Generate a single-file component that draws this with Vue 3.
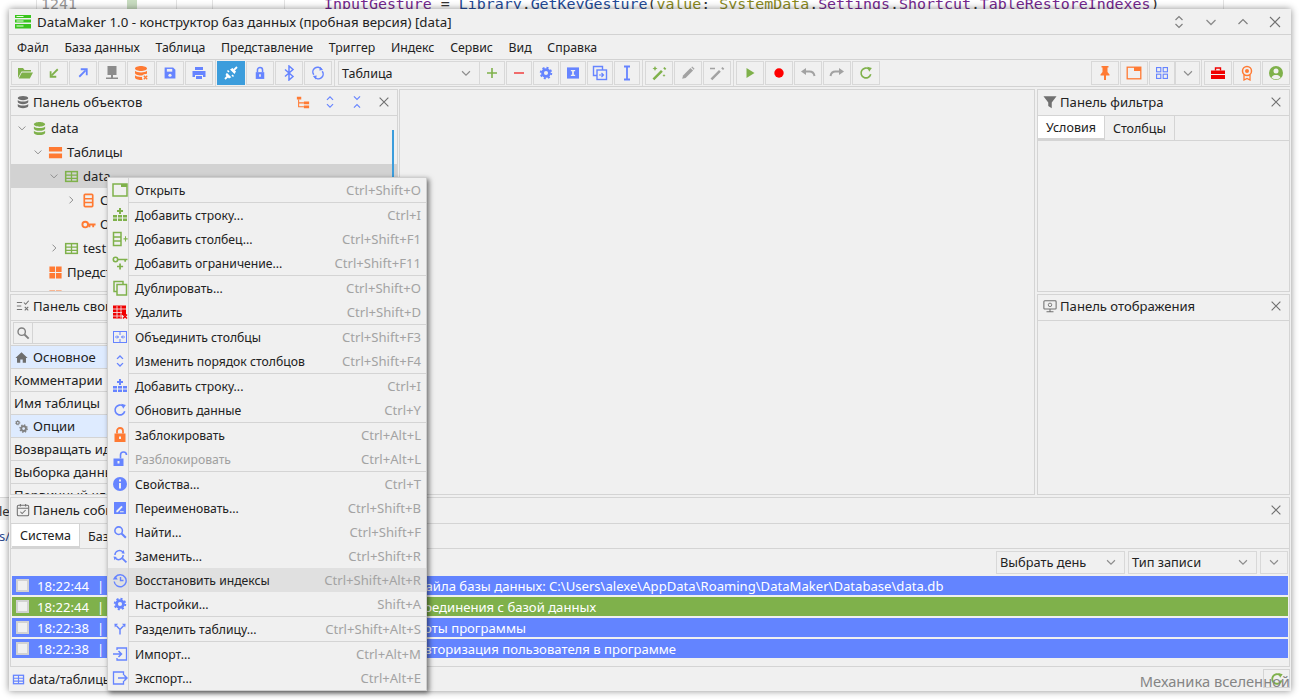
<script setup>
const G = '#7fb14b'
const B = '#6684ff'
const O = '#ff7a33'
const R = '#f00000'
const K = '#8c8c8c'
const L = '#a2a2a2'

const s = (d, c, w = 1.6) => `<path d="${d}" fill="none" stroke="${c}" stroke-width="${w}"/>`
const f = (d, c) => `<path d="${d}" fill="${c}"/>`
// сжать иконку вокруг центра
const k = (n, inner) => `<g transform="translate(${8 - 8 * n} ${8 - 8 * n}) scale(${n})">${inner}</g>`
const gear = (c) => `<circle cx="8" cy="8" r="4.2" fill="none" stroke="${c}" stroke-width="3.4"/><circle cx="8" cy="8" r="6.4" fill="none" stroke="${c}" stroke-width="2.4" stroke-dasharray="2.5 2.5"/>`
const db = (c) => f('M2 3.5C2 2 5 1 8 1s6 1 6 2.5S11 6 8 6 2 5 2 3.5zM2 5.8C3 7 5.5 7.5 8 7.5S13 7 14 5.8V8c0 1.4-3 2.5-6 2.5S2 9.4 2 8zM2 10.300C3 11.5 5.5 12 8 12s5-.5 6-1.700v2.200C14 14 11 15 8 15s-6-1-6-2.500z', c)
const table = (c) => `<rect x="1.800" y="2.800" width="12.400" height="10.400" fill="none" stroke="${c}" stroke-width="1.600"/>` + s('M2 6.500h12M2 10h12M8 3v10', c, 1.400)
const addRow = (c) => f('M7 1h2v2h2v2H9v2H7V5H5V3h2z', c) + `<rect x="1" y="8" width="14" height="6" fill="${c}"/>` + s('M5.500 8v6M10.500 8v6M1 11h14', '#f0f0f0', 1)
const copy = (c) => `<rect x="2" y="1.500" width="9" height="10" fill="none" stroke="${c}" stroke-width="1.500"/><rect x="5" y="4.500" width="9.500" height="10.500" fill="#f0f0f0" stroke="${c}" stroke-width="1.500"/>`
const refresh = (c) => s('M13.300 9.500A5.500 5.500 0 1 1 11.500 3.700', c, 1.800) + f('M9.500 1l5 1.500-3 4z', c)
const wand = (c) => f('M1.500 13.500 10 5l1.800 1.800-8.500 8.500zM12.200 3.200l1.300-1.300 1.800 1.800-1.300 1.300z', c)

const icons = {
  folder: f('M1 3h5l1.500 2H14v1.500H4.500L1 13z', G) + f('M4.800 7.500H16L12.800 13.500H1.700z', G),
  arrowIn: k(0.75, s('M13 3 4.500 11.500', G, 2.400) + s('M3.500 5.500v7.500h7.500', G, 2.400)),
  arrowOut: k(0.75, s('M3 13 11.500 4.500', B, 2.400) + s('M5 3h8v8', B, 2.400)),
  server: f('M3.500 1h9v9h-9z', K) + f('M7 10h2v2.500h5V14H2v-1.500h5z', K),
  dbDel: db(O) + `<circle cx="12.500" cy="12.500" r="3.500" fill="#f0f0f0"/>` + s('M10.800 10.800l3.400 3.400M14.200 10.800l-3.400 3.400', O, 1.300),
  save: k(0.9, f('M2 2h9.500L14 4.500V14H2z', B) + f('M4.500 3.500h6v3h-6z', '#f0f0f0') + `<circle cx="8" cy="10.500" r="1.800" fill="#f0f0f0"/>`),
  print: f('M4 2h8v3H4zM1.500 6h13v6H12v-2H4v2H1.500zM5 11h6v3H5z', B),
  plug: s('M2 14l3-3M14 2l-3 3', '#fff', 1.800) + f('M3.800 7.700 8.300 12.200 6 13.500 2.500 10zM7 4.500l4.500 4.500 1.500-2.500L9.500 3z', '#fff') + s('M6 7 4.500 5.500M9 10l1.500 1.500', '#fff', 1.500),
  lock: k(0.85, f('M3 7h10v8H3z', B) + s('M5 7V4.500a3 3 0 0 1 6 0V7', B, 1.800) + f('M7 9.500h2v3H7z', '#f0f0f0')),
  bluetooth: s('M4 4.500l8 7-4 3.500V1l4 3.500-8 7', B, 1.500),
  sync: k(0.85, s('M3 10A5.500 5.500 0 0 1 12 3.500', B, 1.800) + s('M13 6A5.500 5.500 0 0 1 4 12.500', B, 1.800) + f('M10.500 .5 14 4.500 9.500 5zM5.500 15.500 2 11.500l4.500-.5z', B)),
  plus: f('M7.200 3h1.600v4.200H13v1.600H8.800V13H7.200V8.800H3V7.200h4.200z', G),
  minus: f('M3 7.200h10v1.600H3z', '#f04a4a'),
  gear: k(0.82, gear(B)),
  infoBox: k(0.86, f('M1 1.500h14v13H1z', B) + f('M5.500 4.500h5V6H9v4h1.500v1.500h-5V10H7V6H5.500z', '#f0f0f0')),
  copyBlue: s('M10.500 5V1.500h-9v9H5', B, 1.400) + `<rect x="5" y="5" width="9.500" height="9.500" fill="none" stroke="${B}" stroke-width="1.400"/>` + s('M7 10h4M9.500 8l2 2-2 2', B, 1.200),
  ibeam: s('M5 1.500h6M5 14.500h6M8 1.500v13', B, 1.800),
  wandG: wand(G) + f('M4 1l.8 1.700 1.700.8-1.700.8L4 6l-.8-1.700-1.700-.8 1.700-.8zM13 9l.5 1 1 .5-1 .5-.5 1-.5-1-1-.5 1-.5z', G),
  pencil: k(0.9, f('M1.500 14.500l1-3.800L10.800 2.500l2.800 2.800-8.300 8.200z', L) + f('M11.700 1.600l1-.9 2.600 2.600-1 1z', L)),
  wandK: wand(L) + s('M1 3.500h5', L, 1.500),
  play: f('M4.500 3l8 5-8 5z', G),
  record: `<circle cx="8" cy="8" r="4.700" fill="#f00"/>`,
  undo: s('M3.500 6.500H9.500c2.500 0 4.500 1.500 5 4.500', L, 2) + f('M6 3v7L1 6.500z', L),
  redo: s('M12.500 6.500H6.500c-2.500 0-4.500 1.500-5 4.500', L, 2) + f('M10 3v7l5-3.500z', L),
  refreshG: k(0.9, refresh(G)),
  pin: f('M4.500 1h7v1.500h-1V7l2 2.500v1H9V15H7v-4.500H3.500v-1l2-2.500V2.500h-1z', O),
  win: `<rect x="1.200" y="2.200" width="13.600" height="11.600" fill="none" stroke="${O}" stroke-width="1.300"/>` + f('M8 2h7v4H8z', O),
  grid: k(0.85, `<g fill="none" stroke="${B}" stroke-width="1.300"><rect x="1.600" y="1.600" width="5" height="5"/><rect x="9.400" y="1.600" width="5" height="5"/><rect x="1.600" y="9.400" width="5" height="5"/><rect x="9.400" y="9.400" width="5" height="5"/></g>`),
  chevron: s('M3.500 6 8 10.500 12.500 6', K, 1.300),
  toolbox: f('M1 5.500h14V9H1zM1 10h14v4H1z', R) + s('M5.500 5.500V3h5v2.500', R, 1.400),
  badge: `<circle cx="8" cy="6" r="4.500" fill="none" stroke="${O}" stroke-width="1.500"/><circle cx="8" cy="6" r="2" fill="${O}"/>` + s('M5 10v5l3-1.500 3 1.500v-5', O, 1.300),
  user: `<circle cx="8" cy="8" r="7" fill="${G}"/><circle cx="8" cy="6" r="2.500" fill="#f0f0f0"/>` + f('M3.500 12.500C4.500 10.500 6 10 8 10s3.500.5 4.500 2.500C11.500 13.700 10 14.300 8 14.300S4.500 13.700 3.500 12.500z', '#f0f0f0'),
  dbGray: db('#6e6e6e'),
  dbGreen: db(G),
  treeOrange: f('M1 2h5v3H1zM9 7.500h6v3H9zM9 12h6v3H9z', O) + s('M3 5v8.500h6M3 9h6', O, 1.200),
  expand: s('M4.500 5.500 8 2l3.500 3.500M4.500 10.500 8 14l3.500-3.500', B, 1.300),
  collapse: s('M4.500 1.500 8 5l3.500-3.500M4.500 14.500 8 11l3.500 3.500', B, 1.300),
  close: s('M3 3l10 10M13 3 3 13', '#707070', 1.300),
  updown: s('M4.500 6 8 2.500 11.500 6M4.500 10 8 13.500 11.500 10', '#808080', 1.200),
  up: s('M3.500 10 8 5.500 12.500 10', '#808080', 1.200),
  winClose: s('M3 3l10 10M13 3 3 13', '#707070', 1.100),
  logo: f('M0 1h16v3H0z', '#39c41c') + f('M0 5.500h16v3H0z', '#39c41c') + f('M0 10h16v4.500H0z', '#39c41c') + f('M1.500 6.500h7v1h-7zM1.500 11.500h7v1h-7zM1.500 2h7v1h-7z', '#e8ffe0'),
  tables: f('M1 2h14v5H1zM1 9h14v5H1z', O),
  tableG: table(G),
  tableB: table(B),
  columns: `<rect x="3.500" y="1.500" width="9" height="13" rx="1" fill="none" stroke="${O}" stroke-width="1.800"/>` + s('M4 6h8M4 10h8', O, 1.600),
  key: `<circle cx="4.500" cy="8" r="3" fill="none" stroke="${O}" stroke-width="2"/>` + f('M7 7h8.500v2h-1.500v2h-2V9H10v2H8V9H7z', O),
  views: f('M1.500 1.500h6v6h-6zM8.500 1.500h6v6h-6zM1.500 8.500h6v6h-6zM8.500 8.500h6v6h-6z', O),
  propsPanel: s('M1 4h6M1 8h5M1 12h6', '#707070', 1.100) + s('M9 4l2 2 3.500-4M10 9l4 4M14 9l-4 4', '#707070', 1.200),
  search: `<circle cx="6.500" cy="6.500" r="4.200" fill="none" stroke="#808080" stroke-width="1.600"/>` + s('M9.700 9.700 14.500 14.500', '#808080', 2.200),
  home: f('M8 1.500 15.500 8.500H13.500V14.500H9.500V10.500H6.500V14.500H2.500V8.500H.5z', '#6e6e6e'),
  gears: `<g transform="translate(5 5) scale(.7)">${gear('#808080')}</g><g transform="scale(.42)">${gear('#808080')}</g>`,
  calendar: `<rect x="1.500" y="2.500" width="13" height="12" rx="1.500" fill="none" stroke="#707070" stroke-width="1.200"/>` + s('M2 6h12M5 1v3M11 1v3', '#707070', 1.200) + s('M5 10l2 2 4-4', '#707070', 1.200),
  filter: f('M.5 1.500h15L10 8.500V15l-4-2.500v-4z', '#707070'),
  monitor: `<rect x="1" y="2" width="14" height="9.500" rx="1" fill="none" stroke="#707070" stroke-width="1.200"/>` + s('M4 14.500h8M8 11.500v3', '#707070', 1.200) + `<circle cx="8" cy="6.700" r="2" fill="none" stroke="#707070" stroke-width="1"/>`,
  open: `<rect x="1" y="2" width="14" height="12" fill="none" stroke="${G}" stroke-width="1.500"/>` + f('M9 2h6v3H9z', G),
  addRowG: addRow(G),
  addCol: `<rect x="1.500" y="1.500" width="7.500" height="13" fill="none" stroke="${G}" stroke-width="1.500"/>` + s('M2 6h7M2 10h7', G, 1.500) + f('M11.500 7.200h1.500V5.200h1v2h1.700v1.200H14v2h-1v-2h-1.500z', G),
  keyAdd: `<circle cx="3.500" cy="4.500" r="2.200" fill="none" stroke="${G}" stroke-width="1.600"/>` + f('M5.500 3.700h10v1.600h-1.500v1.500h-1.700V5.300H5.500z', G) + f('M7.200 8.500h1.700v2.200h2.200v1.600H8.900v2.200H7.200v-2.200H5v-1.600h2.200z', G),
  copyG: copy(G),
  tableDel: f('M1 1.500h13V11H10v3.500H1z', R) + s('M1 5h13M1 8.500h9M1 12h9M5 2v12M9 2v12', '#f0f0f0', .8) + s('M11 10.500l4 4M15 10.500l-4 4', R, 1.500),
  merge: `<rect x="1.500" y="2.500" width="13" height="11" fill="none" stroke="${B}" stroke-width="1"/>` + s('M3 8h3.500M13 8H9.500M8 2v4M8 10v4', B, 1) + s('M5 6.500 6.500 8 5 9.500M11 6.500 9.500 8l1.500 1.500', B, 1),
  order: k(0.85, s('M4.500 5.500 8 2l3.500 3.500M4.500 10.500 8 14l3.500-3.500', B, 1.600)),
  addRowB: addRow(B),
  refreshB: k(0.9, refresh(B)),
  lockO: f('M2.500 6.500h11V15h-11z', O) + s('M5 6.500V4a3 3 0 0 1 6 0v2.500', O, 1.800) + f('M7 9.500h2v2.500H7z', '#f0f0f0'),
  unlock: f('M1.500 7.500h10V15h-10z', B) + s('M8.500 7.500V4a3 3 0 0 1 6 0', B, 1.600) + f('M5.500 10h2v2.500h-2z', '#f0f0f0'),
  info: `<circle cx="8" cy="8" r="7" fill="${B}"/>` + f('M7 3.500h2v2H7zM7 7h2v5.500H7z', '#f0f0f0'),
  rename: k(0.92, f('M1.500 1.500h13v13h-13z', B) + f('M4 11l5.500-5.500 1.500 1.500L5.500 12.500H4zM8 11.500h4v1H8z', '#f0f0f0')),
  searchB: k(0.9, `<circle cx="6.500" cy="6.500" r="4.200" fill="none" stroke="${B}" stroke-width="1.700"/>` + s('M9.700 9.700 14.500 14.500', B, 2.300)),
  replace: k(0.92, s('M2.500 7a5 5 0 0 1 8.500-3.500M11.500 7A5 5 0 0 1 3 10.500', B, 1.600) + f('M9.500 5 13 5.500 12 1.500zM4.500 9 1 8.500 2 12.500z', B) + s('M10.500 10.500 15 15', B, 2)),
  restore: s('M3.500 5A6 6 0 1 1 2.200 9.500', B, 1.400) + f('M.8 7.500h5L3.300 3.800z', B) + s('M8.500 5v3.500h3', B, 1.400),
  split: k(0.8, s('M8 15V8.500M8 8.500 3.500 4M8 8.500 12.500 4', B, 1.800) + f('M1 1.500h4.500L1.500 6zM15 1.500h-4.500l4 4.500z', B)),
  importI: s('M5 4V2h9.500v12H5v-2', B, 1.300) + s('M1 8h8M6.500 5 9.500 8l-3 3', B, 1.500),
  exportI: s('M11.500 5V2H1.500v12h10v-3', B, 1.300) + s('M6 8h9M12 5l3 3-3 3', B, 1.500),
  fileG: s('M13.300 9.500A5.500 5.500 0 1 1 11.500 3.700', G, 2.200) + f('M9.500 1l5 1.500-3 4z', G)
}

const menus = ['Файл', 'База данных', 'Таблица', 'Представление', 'Триггер', 'Индекс', 'Сервис', 'Вид', 'Справка']

const toolLeft = [
  ['folder', 'arrowIn', 'arrowOut', 'server', 'dbDel', 'save', 'print'],
  ['plug', 'lock', 'bluetooth', 'sync']
]
const toolEdit = ['plus', 'minus', 'gear', 'infoBox', 'copyBlue', 'ibeam']
const toolWand = ['wandG', 'pencil', 'wandK']
const toolRun = ['play', 'record', 'undo', 'redo', 'refreshG']

const tree = [
  { pad: 5, arrow: 'open', icon: 'dbGreen', text: 'data' },
  { pad: 21, arrow: 'open', icon: 'tables', text: 'Таблицы' },
  { pad: 37, arrow: 'open', icon: 'tableG', text: 'data', selected: true },
  { pad: 54, arrow: 'closed', icon: 'columns', text: 'Столбцы' },
  { pad: 54, arrow: 'none', icon: 'key', text: 'Ограничения' },
  { pad: 37, arrow: 'closed', icon: 'tableG', text: 'test' },
  { pad: 21, arrow: 'none', icon: 'views', text: 'Представления' },
  { pad: 21, arrow: 'none', icon: 'views', text: 'Триггеры' }
]

const props_ = [
  { text: 'Основное', icon: 'home' },
  { text: 'Комментарии' },
  { text: 'Имя таблицы' },
  { text: 'Опции', icon: 'gears' },
  { text: 'Возвращать идентификатор' },
  { text: 'Выборка данных' },
  { text: 'Первичный ключ' }
]

const events = [
  { time: '18:22:44', color: 'blue', text: 'Открытие файла базы данных: C:\\Users\\alexe\\AppData\\Roaming\\DataMaker\\Database\\data.db' },
  { time: '18:22:44', color: 'green', text: 'Установка соединения с базой данных' },
  { time: '18:22:38', color: 'blue', text: 'Начало работы программы' },
  { time: '18:22:38', color: 'blue', text: 'Успешная авторизация пользователя в программе' }
]

const menuGroups = [
  [{ icon: 'open', text: 'Открыть', key: 'Ctrl+Shift+O' }],
  [
    { icon: 'addRowG', text: 'Добавить строку...', key: 'Ctrl+I' },
    { icon: 'addCol', text: 'Добавить столбец...', key: 'Ctrl+Shift+F1' },
    { icon: 'keyAdd', text: 'Добавить ограничение...', key: 'Ctrl+Shift+F11' }
  ],
  [
    { icon: 'copyG', text: 'Дублировать...', key: 'Ctrl+Shift+O' },
    { icon: 'tableDel', text: 'Удалить', key: 'Ctrl+Shift+D' }
  ],
  [
    { icon: 'merge', text: 'Объединить столбцы', key: 'Ctrl+Shift+F3' },
    { icon: 'order', text: 'Изменить порядок столбцов', key: 'Ctrl+Shift+F4' }
  ],
  [
    { icon: 'addRowB', text: 'Добавить строку...', key: 'Ctrl+I' },
    { icon: 'refreshB', text: 'Обновить данные', key: 'Ctrl+Y' }
  ],
  [
    { icon: 'lockO', text: 'Заблокировать', key: 'Ctrl+Alt+L' },
    { icon: 'unlock', text: 'Разблокировать', key: 'Ctrl+Alt+L', disabled: true }
  ],
  [
    { icon: 'info', text: 'Свойства...', key: 'Ctrl+T' },
    { icon: 'rename', text: 'Переименовать...', key: 'Ctrl+Shift+B' },
    { icon: 'searchB', text: 'Найти...', key: 'Ctrl+Shift+F' },
    { icon: 'replace', text: 'Заменить...', key: 'Ctrl+Shift+R' },
    { icon: 'restore', text: 'Восстановить индексы', key: 'Ctrl+Shift+Alt+R', hover: true },
    { icon: 'gear', text: 'Настройки...', key: 'Shift+A' }
  ],
  [{ icon: 'split', text: 'Разделить таблицу...', key: 'Ctrl+Shift+Alt+S' }],
  [
    { icon: 'importI', text: 'Импорт...', key: 'Ctrl+Alt+M' },
    { icon: 'exportI', text: 'Экспорт...', key: 'Ctrl+Alt+E' }
  ]
]
</script>

<template>
  <div class="desktop">
    <div class="code-line">
      <span class="ln">1241</span>
      <span class="code"><i class="pur">InputGesture</i> = <i class="nav">Library</i>.<i class="nav">GetKeyGesture</i>(<i class="oli">value</i>: <i class="oli">SystemData</i>.<i class="pur">Settings</i>.<i class="pur">Shortcut</i>.<i class="pur">TableRestoreIndexes</i>)</span>
    </div>
    <div class="code-edge one">le</div>
    <div class="code-edge two">s/</div>

    <div class="window">
      <header class="titlebar">
        <svg class="logo" viewBox="0 0 16 16" v-html="icons.logo"></svg>
        <span class="title">DataMaker 1.0 - конструктор баз данных (пробная версия) [data]</span>
        <div class="win-btns">
          <svg class="ico" viewBox="0 0 16 16" v-html="icons.updown"></svg>
          <svg class="ico" viewBox="0 0 16 16" v-html="icons.chevron"></svg>
          <svg class="ico" viewBox="0 0 16 16" v-html="icons.up"></svg>
          <svg class="ico" viewBox="0 0 16 16" v-html="icons.winClose"></svg>
        </div>
      </header>

      <nav class="menubar">
        <span v-for="m in menus" :key="m" class="menu-item">{{ m }}</span>
      </nav>

      <div class="toolbar">
        <div v-for="(group, i) in toolLeft" :key="i" class="tool-group">
          <button v-for="name in group" :key="name" class="tool" :class="{ active: name === 'plug' }">
            <svg class="ico" viewBox="0 0 16 16" v-html="icons[name]"></svg>
          </button>
        </div>
        <div class="combo table-combo">
          <span>Таблица</span>
          <svg class="ico small" viewBox="0 0 16 16" v-html="icons.chevron"></svg>
        </div>
        <div class="tool-group">
          <button v-for="name in toolEdit" :key="name" class="tool narrow">
            <svg class="ico" viewBox="0 0 16 16" v-html="icons[name]"></svg>
          </button>
        </div>
        <div class="tool-group wands">
          <button v-for="name in toolWand" :key="name" class="tool">
            <svg class="ico" viewBox="0 0 16 16" v-html="icons[name]"></svg>
          </button>
        </div>
        <div class="tool-group run">
          <button v-for="name in toolRun" :key="name" class="tool">
            <svg class="ico" viewBox="0 0 16 16" v-html="icons[name]"></svg>
          </button>
        </div>
        <div class="spacer"></div>
        <div class="tool-group tight">
          <button class="tool"><svg class="ico" viewBox="0 0 16 16" v-html="icons.pin"></svg></button>
          <button class="tool"><svg class="ico" viewBox="0 0 16 16" v-html="icons.win"></svg></button>
          <button class="tool joined"><svg class="ico" viewBox="0 0 16 16" v-html="icons.grid"></svg></button>
          <button class="tool joined-end"><svg class="ico small" viewBox="0 0 16 16" v-html="icons.chevron"></svg></button>
        </div>
        <div class="tool-group last">
          <button class="tool"><svg class="ico" viewBox="0 0 16 16" v-html="icons.toolbox"></svg></button>
          <button class="tool"><svg class="ico" viewBox="0 0 16 16" v-html="icons.badge"></svg></button>
          <button class="tool"><svg class="ico" viewBox="0 0 16 16" v-html="icons.user"></svg></button>
        </div>
      </div>

      <div class="workspace">
        <div class="side left">
          <section class="panel objects">
            <div class="panel-head">
              <svg class="ico head-ico" viewBox="0 0 16 16" v-html="icons.dbGray"></svg>
              <span class="panel-title">Панель объектов</span>
              <div class="head-actions wide">
                <svg class="ico" viewBox="0 0 16 16" v-html="icons.treeOrange"></svg>
                <svg class="ico" viewBox="0 0 16 16" v-html="icons.expand"></svg>
                <svg class="ico" viewBox="0 0 16 16" v-html="icons.collapse"></svg>
                <svg class="ico" viewBox="0 0 16 16" v-html="icons.close"></svg>
              </div>
            </div>
            <div class="tree">
              <div v-for="(row, i) in tree" :key="i" class="tree-row" :class="{ selected: row.selected }" :style="{ paddingLeft: row.pad + 'px' }">
                <svg v-if="row.arrow === 'open'" class="arrow" viewBox="0 0 16 16" v-html="icons.chevron"></svg>
                <svg v-else-if="row.arrow === 'closed'" class="arrow turned" viewBox="0 0 16 16" v-html="icons.chevron"></svg>
                <span v-else class="arrow"></span>
                <svg class="ico tree-ico" viewBox="0 0 16 16" v-html="icons[row.icon]"></svg>
                <span>{{ row.text }}</span>
              </div>
              <div class="thumb"></div>
            </div>
          </section>

          <section class="panel props">
            <div class="panel-head">
              <svg class="ico head-ico" viewBox="0 0 16 16" v-html="icons.propsPanel"></svg>
              <span class="panel-title">Панель свойств</span>
            </div>
            <div class="search-row">
              <span class="search-cell"><svg class="ico" viewBox="0 0 16 16" v-html="icons.search"></svg></span>
              <span class="search-field"></span>
            </div>
            <div v-for="p in props_" :key="p.text" class="prop-row" :class="{ section: p.icon }">
              <svg v-if="p.icon" class="ico" viewBox="0 0 16 16" v-html="icons[p.icon]"></svg>
              <span>{{ p.text }}</span>
            </div>
          </section>
        </div>

        <section class="panel center"></section>

        <div class="side right">
          <section class="panel filter">
            <div class="panel-head">
              <svg class="ico head-ico" viewBox="0 0 16 16" v-html="icons.filter"></svg>
              <span class="panel-title">Панель фильтра</span>
              <div class="head-actions">
                <svg class="ico" viewBox="0 0 16 16" v-html="icons.close"></svg>
              </div>
            </div>
            <div class="tabs">
              <span class="tab active">Условия</span>
              <span class="tab">Столбцы</span>
            </div>
          </section>
          <section class="panel display">
            <div class="panel-head">
              <svg class="ico head-ico" viewBox="0 0 16 16" v-html="icons.monitor"></svg>
              <span class="panel-title">Панель отображения</span>
              <div class="head-actions">
                <svg class="ico" viewBox="0 0 16 16" v-html="icons.close"></svg>
              </div>
            </div>
          </section>
        </div>
      </div>

      <section class="panel events">
        <div class="panel-head">
          <svg class="ico head-ico" viewBox="0 0 16 16" v-html="icons.calendar"></svg>
          <span class="panel-title">Панель событий</span>
          <div class="head-actions">
            <svg class="ico" viewBox="0 0 16 16" v-html="icons.close"></svg>
          </div>
        </div>
        <div class="tabs events-tabs">
          <span class="tab active">Система</span>
          <span class="tab">База данных</span>
        </div>
        <div class="event-tools">
          <div class="combo day"><span>Выбрать день</span><svg class="ico small" viewBox="0 0 16 16" v-html="icons.chevron"></svg></div>
          <div class="combo day"><span>Тип записи</span><svg class="ico small" viewBox="0 0 16 16" v-html="icons.chevron"></svg></div>
          <div class="combo tiny"><svg class="ico small" viewBox="0 0 16 16" v-html="icons.chevron"></svg></div>
        </div>
        <div class="event-list">
          <div v-for="(e, i) in events" :key="i" class="event" :class="e.color">
            <span class="check"></span>
            <span class="time">{{ e.time }}</span>
            <span class="pipe">|</span>
            <span class="msg">{{ e.text }}</span>
          </div>
        </div>
      </section>

      <footer class="statusbar">
        <svg class="ico status-ico" viewBox="0 0 16 16" v-html="icons.tableB"></svg>
        <span>data/таблицы/data</span>
        <div class="status-right">
          <span class="refresh-box"><svg class="ico small" viewBox="0 0 16 16" v-html="icons.fileG"></svg></span>
          <span class="watermark">Механика вселенной</span>
        </div>
      </footer>

      <div class="context-menu">
        <template v-for="(group, i) in menuGroups" :key="i">
          <div v-for="item in group" :key="item.text + item.key" class="ctx-item" :class="{ hover: item.hover, disabled: item.disabled }">
            <span class="ctx-gutter"><svg class="ico" viewBox="0 0 16 16" v-html="icons[item.icon]"></svg></span>
            <span class="ctx-text">{{ item.text }}</span>
            <span class="ctx-key">{{ item.key }}</span>
          </div>
          <div v-if="i < menuGroups.length - 1" class="ctx-sep"><span class="ctx-gutter"></span><span class="ctx-line"></span></div>
        </template>
      </div>
    </div>
  </div>
</template>

<style scoped>
.desktop {
  position: relative;
  width: 1300px;
  height: 700px;
  overflow: hidden;
  background: #fff;
  font-family: "Noto Sans", "Open Sans", sans-serif;
  font-size: 12.5px;
  color: #222;
}

.code-line {
  position: absolute;
  left: 0;
  top: -6px;
  width: 1300px;
  height: 20px;
  font-family: "DejaVu Sans Mono", monospace;
  font-size: 14.93px;
  line-height: 20px;
  white-space: pre;
  background-image:
    linear-gradient(#e4e4e4, #e4e4e4),
    linear-gradient(#c8dcc0, #c8dcc0),
    linear-gradient(#e4e4e4, #e4e4e4),
    linear-gradient(#e4e4e4, #e4e4e4),
    linear-gradient(#e4e4e4, #e4e4e4),
    linear-gradient(#e4e4e4, #e4e4e4);
  background-size: 1px 100%, 10px 100%, 1px 100%, 1px 100%, 1px 100%, 1px 100%;
  background-position: 36px 0, 127px 0, 176px 0, 212px 0, 284px 0, 1223px 0;
  background-repeat: no-repeat;
}
.ln {
  position: absolute;
  left: 41px;
  color: #999;
}
.code {
  position: absolute;
  left: 324px;
  color: #333;
}
.code i { font-style: normal; }
.pur { color: #74278e; }
.nav { color: #234a97; }
.oli { color: #8a8a1c; }

.code-edge {
  position: absolute;
  left: -1px;
  width: 11px;
  color: #333;
  font-size: 13px;
  white-space: nowrap;
}
.code-edge.one {
  top: 497px;
  height: 22px;
  line-height: 26px;
  background: #f2f2f2;
  border-top: 1px solid #d8d8d8;
}
.code-edge.two { top: 527px; color: #2b4a8f; }

.window {
  position: absolute;
  left: 9px;
  top: 9px;
  width: 1282px;
  height: 682px;
  display: flex;
  flex-direction: column;
  box-sizing: border-box;
  padding: 0 1px;
  background: #f0f0f0;
  box-shadow: 0 0 7px rgba(0, 0, 0, 0.45);
}

.ico {
  display: block;
  width: 16px;
  height: 16px;
  flex: none;
}
.ico.small { width: 14px; height: 14px; }

.titlebar {
  display: flex;
  align-items: center;
  height: 26px;
  flex: none;
  box-sizing: border-box;
  margin: 0 -1px;
  padding: 0 8px 0 6px;
  border-bottom: 1px solid #d2d2d2;
}
.logo { width: 16px; height: 16px; flex: none; }
.title {
  margin-left: 6px;
  font-size: 13.3px;
  white-space: nowrap;
}
.win-btns {
  margin-left: auto;
  display: flex;
  gap: 16px;
}

.menubar {
  display: flex;
  align-items: center;
  gap: 15.7px;
  height: 25px;
  flex: none;
  box-sizing: border-box;
  margin: 0 -1px;
  padding-left: 8px;
  font-size: 12.3px;
  border-bottom: 1px solid #d2d2d2;
}

.toolbar {
  display: flex;
  align-items: center;
  height: 27px;
  flex: none;
  box-sizing: border-box;
  border-bottom: 1px solid #d2d2d2;
}
.tool-group {
  display: flex;
  gap: 1px;
  padding: 0 2px 0 1px;
  border-right: 1px solid #d8d8d8;
  height: 26px;
  align-items: center;
}
.tool-group.wands { padding-left: 2px; }
.tool-group.run { padding-left: 2px; border-right: none; }
.tool-group.tight { padding-right: 1px; }
.tool-group.last { border-right: none; padding: 0 0 0 2px; }
.tool {
  width: 28px;
  height: 24px;
  padding: 0;
  display: flex;
  align-items: center;
  justify-content: center;
  box-sizing: border-box;
  background: #f0f0f0;
  border: 1px solid #d8d8d8;
}
.tool.narrow { width: 26px; }
.tool.active { background: #3c9ddc; border-color: #3c9ddc; }
.tool.joined { width: 26px; margin-right: -1px; }
.tool.joined-end { width: 25px; }
.spacer { flex: 1; }

.combo {
  display: flex;
  align-items: center;
  justify-content: space-between;
  height: 24px;
  box-sizing: border-box;
  padding: 0 6px 0 3px;
  border: 1px solid #d8d8d8;
}
.table-combo {
  width: 142px;
  margin-left: 3px;
  margin-right: -2px;
  flex: none;
}

.workspace {
  display: flex;
  gap: 2px;
  height: 406px;
  flex: none;
  margin-top: 2px;
}
.side {
  display: flex;
  flex-direction: column;
  gap: 2px;
  flex: none;
}
.side.left { width: 388px; margin-right: -1px; }
.side.right { width: 253px; }
.panel {
  box-sizing: border-box;
  border: 1px solid #d4d4d4;
  overflow: hidden;
  position: relative;
}
.center { flex: 1; }
.objects, .filter { height: 203px; flex: none; }
.props, .display { flex: 1; }

.panel-head {
  display: flex;
  align-items: center;
  height: 26px;
  box-sizing: border-box;
  padding: 0 6px 2px 5px;
  font-size: 13.1px;
  border-bottom: 1px solid #d4d4d4;
}
.props .panel-head, .display .panel-head { padding-bottom: 4px; }
.head-ico { width: 14px; height: 14px; margin-right: 3px; }
.panel-title { white-space: nowrap; }
.head-actions {
  margin-left: auto;
  display: flex;
  gap: 11px;
}
.head-actions .ico { width: 14px; height: 14px; }
.head-actions.wide .ico { margin-left: 2px; }

.tree { position: relative; height: 176px; overflow: hidden; font-size: 13.1px; }
.tree-row {
  display: flex;
  align-items: center;
  height: 24px;
  box-sizing: border-box;
  white-space: nowrap;
}
.tree-row.selected { background: #d2d2d2; }
.arrow { width: 12px; height: 12px; flex: none; margin-right: 3.5px; display: block; }
.arrow.turned { transform: rotate(-90deg); }
.tree-ico { width: 15px; height: 15px; margin-right: 4.5px; }
.thumb {
  position: absolute;
  right: 3px;
  top: 14px;
  width: 2px;
  height: 60px;
  background: #3c9ddc;
}

.search-row {
  display: flex;
  align-items: center;
  height: 25px;
  box-sizing: border-box;
  padding: 0 2px;
  border-bottom: 1px solid #d4d4d4;
}
.search-cell {
  display: flex;
  align-items: center;
  justify-content: center;
  width: 20px;
  height: 22px;
  box-sizing: border-box;
  border: 1px solid #d4d4d4;
}
.search-cell .ico { width: 14px; height: 14px; }
.search-field {
  flex: 1;
  height: 22px;
  box-sizing: border-box;
  border: 1px solid #d4d4d4;
  border-left: none;
}
.prop-row {
  display: flex;
  align-items: center;
  gap: 5px;
  height: 23px;
  box-sizing: border-box;
  padding-left: 3px;
  font-size: 13.1px;
  border-bottom: 1px solid #d4d4d4;
  white-space: nowrap;
}
.prop-row .ico { width: 13px; height: 13px; margin-left: 1px; }
.prop-row.section { background: #deebff; }

.tabs {
  display: flex;
  height: 25px;
  box-sizing: border-box;
  border-bottom: 1px solid #d4d4d4;
}
.tab {
  display: flex;
  align-items: center;
  padding: 0 8px;
  border-right: 1px solid #d4d4d4;
  white-space: nowrap;
}
.tab.active {
  background: #fff;
  border-bottom: 2px solid #d4d4d4;
  height: 22px;
}

.events {
  height: 170px;
  flex: none;
  margin-top: 2px;
}
.events-tabs { padding-left: 1px; }
.event-tools {
  display: flex;
  justify-content: flex-end;
  align-items: center;
  gap: 3px;
  height: 26px;
  padding-right: 1px;
  font-size: 12.8px;
}
.combo.day { width: 129px; padding-left: 3px; height: 23px; }
.combo.tiny { width: 28px; height: 23px; justify-content: center; padding: 0; }
.event-list {
  display: flex;
  flex-direction: column;
  gap: 2px;
  padding: 1px 1px 0 1px;
  height: 90px;
}
.event {
  display: flex;
  align-items: center;
  height: 19px;
  flex: none;
  color: #fff;
  font-size: 13.1px;
  white-space: nowrap;
  overflow: hidden;
}
.event.blue { background: #6384ff; }
.event.green { background: #7fb14b; }
.check {
  width: 13px;
  height: 13px;
  flex: none;
  margin-left: 4px;
  box-sizing: border-box;
  background: #f0f0f0;
  border: 2px solid #d2d2d2;
}
.time { margin-left: 8px; }
.pipe { margin-left: 8px; }
.msg { margin-left: 246px; }

.statusbar {
  display: flex;
  align-items: center;
  height: 22px;
  flex: none;
  box-sizing: border-box;
  padding-top: 1px;
  margin-top: 1px;
  white-space: nowrap;
}
.status-ico { width: 13px; height: 13px; margin: 0 4px 0 2px; }
.status-right {
  margin-left: auto;
  position: relative;
  display: flex;
  justify-content: flex-end;
  width: 160px;
  height: 21px;
}
.refresh-box {
  display: flex;
  align-items: center;
  justify-content: center;
  width: 27px;
  height: 19px;
  box-sizing: border-box;
  border: 1px solid #d4d4d4;
}
.watermark {
  position: absolute;
  right: 0;
  top: 2px;
  font-size: 14.7px;
  line-height: 20px;
  color: #858585;
}

.context-menu {
  position: absolute;
  left: 98px;
  top: 168px;
  width: 320px;
  box-sizing: border-box;
  border: 1px solid #cfcfcf;
  background: #f0f0f0;
  font-size: 12.2px;
  box-shadow: 2px 2px 5px rgba(0, 0, 0, 0.55);
}
.ctx-item {
  display: flex;
  align-items: center;
  height: 24px;
}
.ctx-item.hover { background: #e0e0e0; }
.ctx-item.disabled .ctx-text { color: #a0a0a0; }
.ctx-gutter {
  display: flex;
  align-items: center;
  justify-content: center;
  width: 21px;
  height: 100%;
  flex: none;
  box-sizing: border-box;
  padding-left: 3px;
  border-right: 1px solid #d4d4d4;
  background: #f0f0f0;
}
.ctx-item.hover .ctx-gutter { background: #e0e0e0; }
.ctx-text { margin-left: 6px; white-space: nowrap; }
.ctx-key {
  margin-left: auto;
  padding-right: 5px;
  font-size: 13.1px;
  color: #a3a3a3;
  white-space: nowrap;
}
.ctx-sep { display: flex; height: 1px; }
.ctx-line { flex: 1; background: #d4d4d4; }
</style>
